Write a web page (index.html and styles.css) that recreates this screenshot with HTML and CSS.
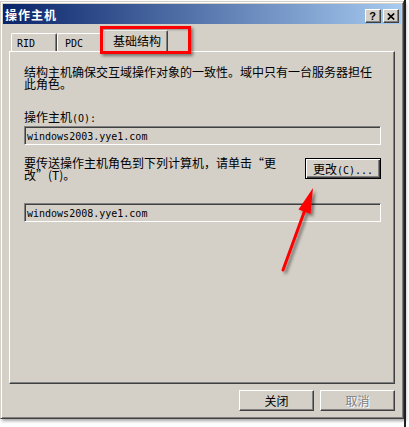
FILE: index.html
```html
<!DOCTYPE html>
<html lang="zh-CN">
<head>
<meta charset="utf-8">
<title>操作主机</title>
<link rel="stylesheet" href="styles.css">
</head>
<body>
<div class="screen">
  <div class="dialog">
    <div class="titlebar">
      <span class="title">操作主机</span>
      <div class="capbtns">
        <span class="capbtn help">?</span>
        <span class="capbtn close"><svg width="8" height="7" viewBox="0 0 8 7"><path d="M0.8 0.5L7.2 6.5M7.2 0.5L0.8 6.5" stroke="#000" stroke-width="1.7"/></svg></span>
      </div>
    </div>
    <div class="body">
      <div class="tabs">
        <div class="tab t-rid"><span class="lat">RID</span></div>
        <div class="tab t-pdc"><span class="lat">PDC</span></div>
        <div class="tab selected">基础结构</div>
      </div>
      <div class="panel">
        <p class="desc">结构主机确保交互域操作对象的一致性。域中只有一台服务器担任此角色。</p>
        <div class="lbl">操作主机<span class="lat">(O):</span></div>
        <div class="field"><span class="lat">windows2003.yye1.com</span></div>
        <div class="row">
          <p class="desc two">要传送操作主机角色到下列计算机，请单击“更
改”(T)。</p>
          <button class="btn default">更改<span class="lat">(C)...</span></button>
        </div>
        <div class="field f2"><span class="lat">windows2008.yye1.com</span></div>
      </div>
      <div class="footer">
        <button class="btn">关闭</button>
        <button class="btn disabled">取消</button>
      </div>
    </div>
  </div>
  <div class="side"></div>
  <div class="mark"></div>
  <svg class="arrow" width="409" height="427" viewBox="0 0 409 427">
    <defs>
      <filter id="sh" x="-50%" y="-50%" width="200%" height="200%">
        <feDropShadow dx="2.5" dy="2.5" stdDeviation="1.6" flood-color="#000" flood-opacity="0.45"/>
      </filter>
    </defs>
    <g filter="url(#sh)">
      <line x1="283" y1="270" x2="306" y2="207" stroke="#ff0000" stroke-width="3" stroke-linecap="round"/>
      <polygon points="313,188 298.5,209.5 310.5,214" fill="#ff0000"/>
    </g>
  </svg>
</div>
</body>
</html>
```
FILE: styles.css
```css
* { box-sizing: border-box; }
html, body { margin: 0; padding: 0; }
body {
  width: 409px;
  height: 427px;
  overflow: hidden;
  background: #ffffff;
  font-family: "Noto Sans CJK SC", sans-serif;
  font-size: 12px;
  color: #000;
}
.screen {
  position: relative;
  display: flex;
  width: 409px;
  height: 427px;
}
.dialog {
  width: 404px;
  height: 418px;
  margin-top: 1px;
  flex: none;
  background: #d4d0c8;
  border: 1px solid;
  border-color: #d4d0c8 #404040 #404040 #d4d0c8;
  box-shadow: inset 1px 1px #ffffff, inset -1px -1px #808080, 2px 2px 3px rgba(0,0,0,0.35);
  padding: 2px;
  display: flex;
  flex-direction: column;
}
.titlebar {
  height: 20px;
  flex: none;
  background: linear-gradient(to right, #0a246a, #a6caf0);
  display: flex;
  align-items: flex-start;
  padding: 0 2px 0 2px;
}
.title {
  flex: 1;
  color: #fff;
  font-weight: bold;
  letter-spacing: 1px;
  line-height: 21px;
}
.capbtns {
  display: flex;
  gap: 2px;
  margin-top: 5px;
}
.capbtn {
  width: 16px;
  height: 14px;
  background: #d4d0c8;
  border: 1px solid;
  border-color: #ffffff #404040 #404040 #ffffff;
  box-shadow: inset -1px -1px #808080;
  display: flex;
  align-items: center;
  justify-content: center;
}
.help {
  font-family: "Liberation Sans", sans-serif;
  font-weight: bold;
  font-size: 11px;
  line-height: 12px;
  padding-right: 1px;
}
.close svg { display: block; margin-right: 1px; }
.body {
  flex: 1;
  padding: 6px 6px 5px 6px;
  display: flex;
  flex-direction: column;
}
.tabs {
  height: 21px;
  flex: none;
  display: flex;
  align-items: flex-end;
  padding-left: 2px;
  position: relative;
  z-index: 1;
}
.tab {
  height: 18px;
  background: #d4d0c8;
  border-top: 1px solid #ffffff;
  border-left: 1px solid #ffffff;
  border-right: 1px solid #404040;
  box-shadow: inset -1px 0 #808080;
  border-radius: 2px 2px 0 0;
  line-height: 16px;
  white-space: nowrap;
}
.t-rid { width: 46px; padding-left: 5px; }
.t-pdc { width: 48px; padding-left: 7px; }
.tab.selected {
  width: 65px;
  height: 22px;
  margin-left: -2px;
  margin-bottom: -1px;
  padding-left: 9px;
  padding-top: 2px;
}
.lat {
  font-family: "DejaVu Sans Mono", "Liberation Mono", monospace;
  font-size: 10px;
  line-height: 10px;
}
.panel {
  height: 333px;
  flex: none;
  border: 1px solid;
  border-color: #ffffff #404040 #404040 #ffffff;
  box-shadow: inset -1px -1px #808080;
  padding: 14px 13px 0 14px;
}
.desc {
  margin: 0;
  line-height: 12px;
}
.desc.two {
  white-space: pre-line;
}
.lbl {
  margin-top: 21px;
  height: 12px;
  line-height: 12px;
}
.field {
  margin-top: 3px;
  height: 19px;
  border: 1px solid;
  border-color: #808080 #ffffff #ffffff #808080;
  box-shadow: inset 1px 1px #404040, inset -1px -1px #d4d0c8;
  padding-left: 2px;
  line-height: 16px;
  white-space: nowrap;
}
.row {
  margin-top: 12px;
  height: 24px;
  display: flex;
  justify-content: space-between;
  align-items: flex-start;
}
.f2 { margin-top: 22px; }
.btn {
  font-family: "Noto Sans CJK SC", sans-serif;
  font-size: 12px;
  color: #000;
  background: #d4d0c8;
  border: 1px solid;
  border-color: #ffffff #404040 #404040 #ffffff;
  box-shadow: inset -1px -1px #808080;
  padding: 0;
  width: 75px;
  height: 21px;
  line-height: 18px;
}
.btn.default {
  width: 76px;
  margin-top: 1px;
  border: 1px solid #000;
  box-shadow: inset 1px 1px #ffffff, inset -1px -1px #404040, inset -2px -2px #808080;
}
.btn.disabled {
  color: #808080;
  text-shadow: 1px 1px #ffffff;
}
.footer {
  margin-top: 6px;
  display: flex;
  justify-content: flex-end;
  gap: 6px;
}
.side {
  flex: 1;
  border-left: 2px solid #202020;
}
.mark {
  position: absolute;
  left: 100px;
  top: 26px;
  width: 91px;
  height: 28px;
  border: 3px solid #ff0000;
  box-shadow: 2px 2px 3px rgba(0,0,0,0.45), inset 1px 1px 2px rgba(0,0,0,0.3);
  z-index: 5;
}
.arrow {
  position: absolute;
  left: 0;
  top: 0;
  pointer-events: none;
  z-index: 6;
}
```
